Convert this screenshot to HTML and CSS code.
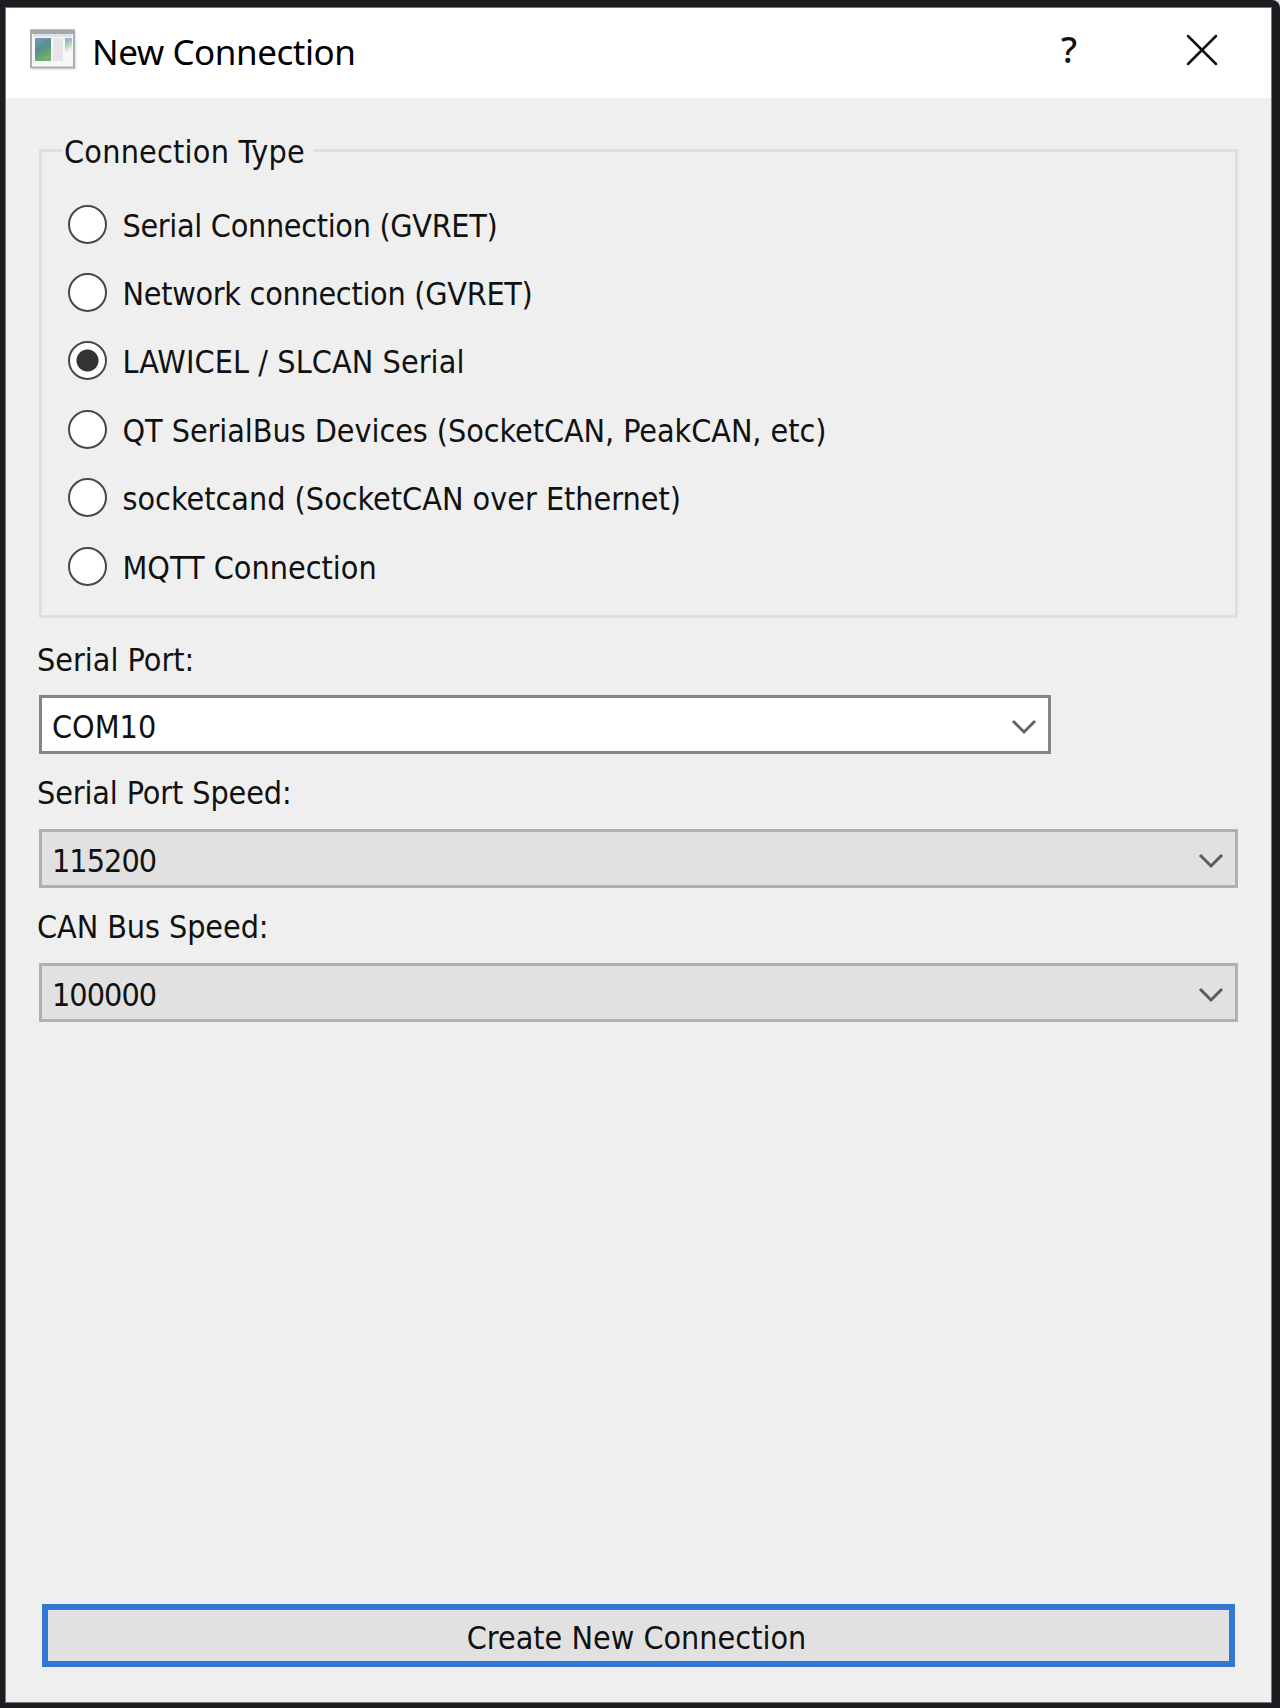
FILE: index.html
```html
<!DOCTYPE html>
<html lang="en">
<head>
<meta charset="utf-8">
<title>New Connection</title>
<link rel="stylesheet" href="styles.css">
</head>
<body>
<div class="frame">
  <main class="window">
    <header class="titlebar">
      <svg class="app-icon" width="50" height="44" viewBox="0 0 50 44">
        <defs>
          <linearGradient id="pane" x1="0" y1="0" x2="0.4" y2="1"><stop offset="0" stop-color="#7a97bd"/><stop offset="0.5" stop-color="#558f8f"/><stop offset="1" stop-color="#6fb16c"/></linearGradient>
          <linearGradient id="side" x1="0" y1="0" x2="0.3" y2="1"><stop offset="0" stop-color="#86a4d0"/><stop offset="0.6" stop-color="#b5d5bd"/><stop offset="1" stop-color="#f1f4ef"/></linearGradient>
        </defs>
        <rect x="1.5" y="2.5" width="45" height="39" rx="1" fill="#e9eaeb"/>
        <rect x="1" y="1.5" width="43" height="37" fill="#f7f7f7" stroke="#a9adb3" stroke-width="2"/>
        <rect x="0.5" y="0.5" width="44" height="4.5" fill="#a5a8ad"/>
        <rect x="3" y="5" width="39" height="3" fill="#dfe0ea"/>
        <rect x="5" y="9" width="16" height="23" fill="url(#pane)"/>
        <rect x="23" y="9" width="10" height="23" fill="#e6e6e6"/>
        <rect x="35" y="9" width="7" height="14" fill="url(#side)"/>
      </svg>
      <h1 class="title">New Connection</h1>
      <span class="help">?</span>
      <svg class="close" width="32" height="32" viewBox="0 0 32 32"><path d="M2 2L30 30M30 2L2 30" fill="none" stroke="#111" stroke-width="2.5" stroke-linecap="round"/></svg>
    </header>
    <form class="content">
      <fieldset class="group">
        <legend class="legend"><span class="t t-type">Connection Type</span></legend>
        <div class="option"><i class="radio"></i><span class="t t-serial">Serial Connection (GVRET)</span></div>
        <div class="option"><i class="radio"></i><span class="t t-network">Network connection (GVRET)</span></div>
        <div class="option"><i class="radio checked"></i><span class="t t-lawicel">LAWICEL / SLCAN Serial</span></div>
        <div class="option"><i class="radio"></i><span class="t t-qt">QT SerialBus Devices (SocketCAN, PeakCAN, etc)</span></div>
        <div class="option"><i class="radio"></i><span class="t t-socket">socketcand (SocketCAN over Ethernet)</span></div>
        <div class="option"><i class="radio"></i><span class="t t-mqtt">MQTT Connection</span></div>
      </fieldset>
      <div class="label first"><span class="t t-port">Serial Port:</span></div>
      <div class="combo editable"><span class="t t-com">COM10</span><svg class="chevron" width="26" height="18" viewBox="0 0 26 18"><path d="M2 3L13 14L24 3" fill="none" stroke="#666" stroke-width="3"/></svg></div>
      <div class="label"><span class="t t-speed">Serial Port Speed:</span></div>
      <div class="combo"><span class="t t-num">115200</span><svg class="chevron" width="26" height="18" viewBox="0 0 26 18"><path d="M2 3L13 14L24 3" fill="none" stroke="#5c5c5c" stroke-width="3"/></svg></div>
      <div class="label"><span class="t t-can">CAN Bus Speed:</span></div>
      <div class="combo"><span class="t t-num">100000</span><svg class="chevron" width="26" height="18" viewBox="0 0 26 18"><path d="M2 3L13 14L24 3" fill="none" stroke="#5c5c5c" stroke-width="3"/></svg></div>
      <button class="create" type="button"><span class="t t-create">Create New Connection</span></button>
    </form>
  </main>
</div>
</body>
</html>
```
FILE: styles.css
```css
* { box-sizing: border-box; }
body { margin: 0; background: #dfe0e1; font-family: "DejaVu Sans Condensed", "DejaVu Sans", sans-serif; font-stretch: condensed; font-size: 32px; color: #111; }
.frame { width: 1280px; height: 1708px; padding: 8px 9px 6px 6px; background: #1b1d20; border-top-right-radius: 8px; }
.window { height: 1694px; display: flex; flex-direction: column; background: #efefef; box-shadow: 0 0 0 1px #77787a; }
.titlebar { height: 90px; flex: none; display: flex; align-items: flex-start; background: #fff; padding-left: 24px; }
.app-icon { margin-top: 21px; }
.title { margin: 22px 0 0 12px; font: 400 35px/44px "Noto Sans", sans-serif; letter-spacing: -0.45px; color: #000; white-space: nowrap; width: 300px; }
.help { margin: 20px 0 0 665px; width: 24px; font: 500 36px/44px "Noto Sans", sans-serif; text-align: center; }
.close { margin: 26px 0 0 105px; }
.content { flex: 1; display: flex; flex-direction: column; padding: 32px 33px 34px 32px; }
.group { margin: 0 0 0 1px; padding: 19px 0 0 26px; height: 488px; border: 3px solid #dfdfdf; min-width: 0; }
.legend { padding: 2px 8px 0 0; margin-left: -5px; line-height: 40px; height: 41px; }
.t { display: inline-block; white-space: nowrap; }
.t-type { letter-spacing: 0.22px; padding-left: 1px; }
.t-serial { letter-spacing: -0.32px; }
.t-network { letter-spacing: -0.28px; }
.t-lawicel { letter-spacing: 0.08px; }
.t-qt { letter-spacing: -0.06px; }
.t-speed { letter-spacing: -0.12px; }
.t-can { letter-spacing: -0.08px; }
.t-num { letter-spacing: -0.95px; }
.option { display: flex; align-items: center; height: 68.4px; gap: 15.5px; }
.option .t { padding-top: 3px; }
.radio { width: 39px; height: 39px; border: 2.5px solid #484848; border-radius: 50%; background: #fff; flex: none; }
.radio.checked { background: radial-gradient(circle, #333 0 10.5px, #fff 11.5px); }
.label { height: 74px; line-height: 40px; padding-top: 18px; margin-left: -1px; }
.label.first { height: 77px; padding-top: 22px; }
.combo { height: 59px; margin: 0 0 1px 1px; flex: none; border: 3px solid #b0b0b0; background: #e1e1e1; padding: 5px 11px 0 10px; display: flex; align-items: center; justify-content: space-between; }
.combo.editable { width: 1012px; background: #fff; border-color: #858585; }
.create { height: 63px; margin: auto 3px 1px 4px; padding: 4px 4px 0 0; border: 6px solid #3277d2; background: #e1e1e1; font: inherit; color: #111; }
```
